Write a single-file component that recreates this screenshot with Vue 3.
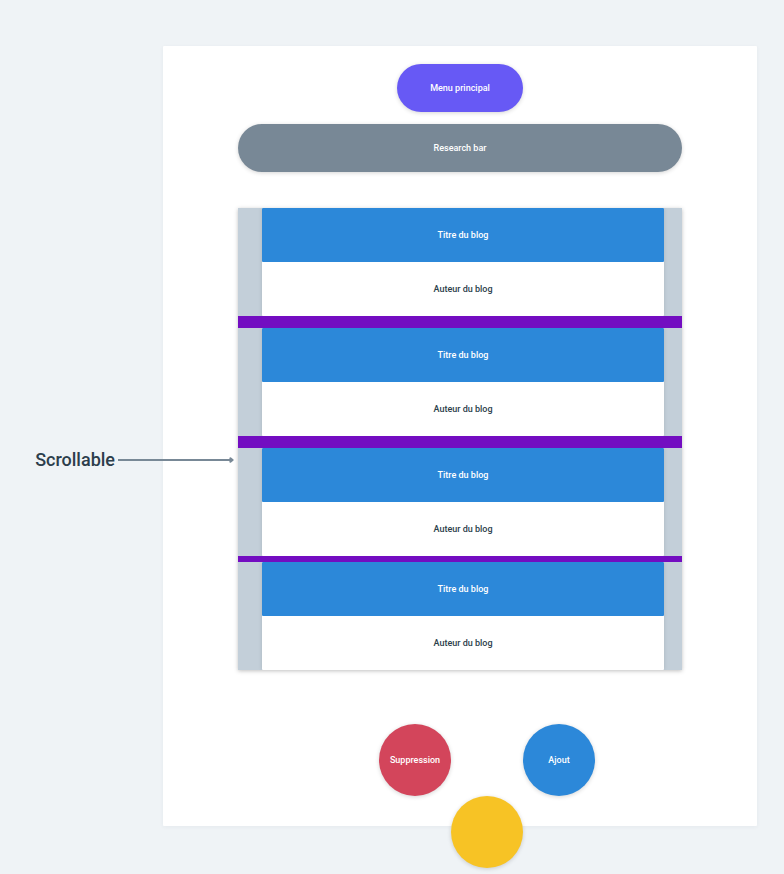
<script setup>
const blogs = [
  { id: 1, title: 'Titre du blog', author: 'Auteur du blog' },
  { id: 2, title: 'Titre du blog', author: 'Auteur du blog' },
  { id: 3, title: 'Titre du blog', author: 'Auteur du blog', tight: true },
  { id: 4, title: 'Titre du blog', author: 'Auteur du blog' },
]
</script>

<template>
  <div class="page">
    <main class="panel">
      <button type="button" class="menu">Menu principal</button>
      <input class="search" type="text" placeholder="Research bar" aria-label="Research bar" />

      <section class="blogs">
        <ul class="list">
          <li v-for="blog in blogs" :key="blog.id" class="blog" :class="{ tight: blog.tight }">
            <article class="card">
              <h2 class="title">{{ blog.title }}</h2>
              <p class="author">{{ blog.author }}</p>
            </article>
          </li>
        </ul>
        <div class="note">
          <span>Scrollable</span>
          <svg class="arrow" viewBox="0 0 116 8" aria-hidden="true">
            <path d="M0 4H114" />
            <path d="M112.4 2.2L114.6 4L112.4 5.8Z" class="head" />
          </svg>
        </div>
      </section>

      <div class="actions">
        <button type="button" class="round red">Suppression</button>
        <button type="button" class="round blue">Ajout</button>
        <button type="button" class="round yellow" aria-label="Action"></button>
      </div>
    </main>
  </div>
</template>

<style>
body {
  background: #eff3f6;
}
</style>

<style scoped>
.page {
  padding: 46px 27px 48px 163px;
  font-family: Roboto, "Liberation Sans", sans-serif;
  font-size: 9px;
  font-weight: 500;
  line-height: 12px;
  color: #2c3e4c;
}

.page *,
.page {
  box-sizing: border-box;
}

.panel {
  display: flex;
  flex-direction: column;
  align-items: center;
  padding: 18px 75px 0;
  background: #fff;
  border-radius: 1px;
  box-shadow: 0 1px 4px rgba(40, 60, 80, 0.05);
}

button,
input {
  border: 0;
  font: inherit;
  color: #fff;
  text-align: center;
  box-shadow: 0 1px 4px rgba(0, 0, 0, 0.17);
}

button {
  cursor: pointer;
}

.menu {
  width: 126px;
  height: 48px;
  padding: 0;
  border-radius: 24px;
  background: #6759f5;
}

.search {
  width: 100%;
  height: 48px;
  margin-top: 12px;
  padding: 0 24px;
  border-radius: 24px;
  background: #788896;
}

.search::placeholder {
  color: #fff;
  opacity: 1;
}

.blogs {
  position: relative;
  width: 100%;
  margin-top: 36px;
}

.list {
  margin: 0;
  padding: 0;
  list-style: none;
  background: #c3cfd9;
  box-shadow: 0 1px 4px rgba(0, 0, 0, 0.25);
}

.blog {
  padding: 0 18px 0 24px;
  border-bottom: 12px solid #730dc1;
}

.blog.tight {
  border-bottom-width: 6px;
}

.blog:last-child {
  border-bottom: 0;
}

.card {
  background: #fff;
  border-radius: 1px;
  box-shadow: 0 0 4px rgba(0, 0, 0, 0.12);
  clip-path: inset(0 -4px);
}

.title,
.author {
  display: flex;
  align-items: center;
  justify-content: center;
  height: 54px;
  margin: 0;
  font-size: 9px;
  font-weight: 500;
}

.title {
  background: #2c88d9;
  border-radius: 1px;
  color: #fff;
}

.note {
  position: absolute;
  top: 240px;
  right: calc(100% + 4px);
  display: flex;
  align-items: center;
  gap: 3px;
  font-size: 18px;
  line-height: 24px;
}

.arrow {
  width: 116px;
  height: 8px;
  fill: none;
  stroke: #788896;
  stroke-width: 2;
  stroke-linejoin: round;
}

.head {
  fill: #788896;
}

.actions {
  display: grid;
  grid-template-columns: repeat(3, 72px);
  grid-template-rows: repeat(2, 72px);
  margin: 54px 0 -42px;
  padding-left: 54px;
}

.round {
  width: 72px;
  height: 72px;
  padding: 0;
  border-radius: 50%;
}

.red {
  grid-area: 1 / 1;
  background: #d3455b;
}

.blue {
  grid-area: 1 / 3;
  background: #2c88d9;
}

.yellow {
  grid-area: 2 / 2;
  background: #f7c325;
}
</style>
